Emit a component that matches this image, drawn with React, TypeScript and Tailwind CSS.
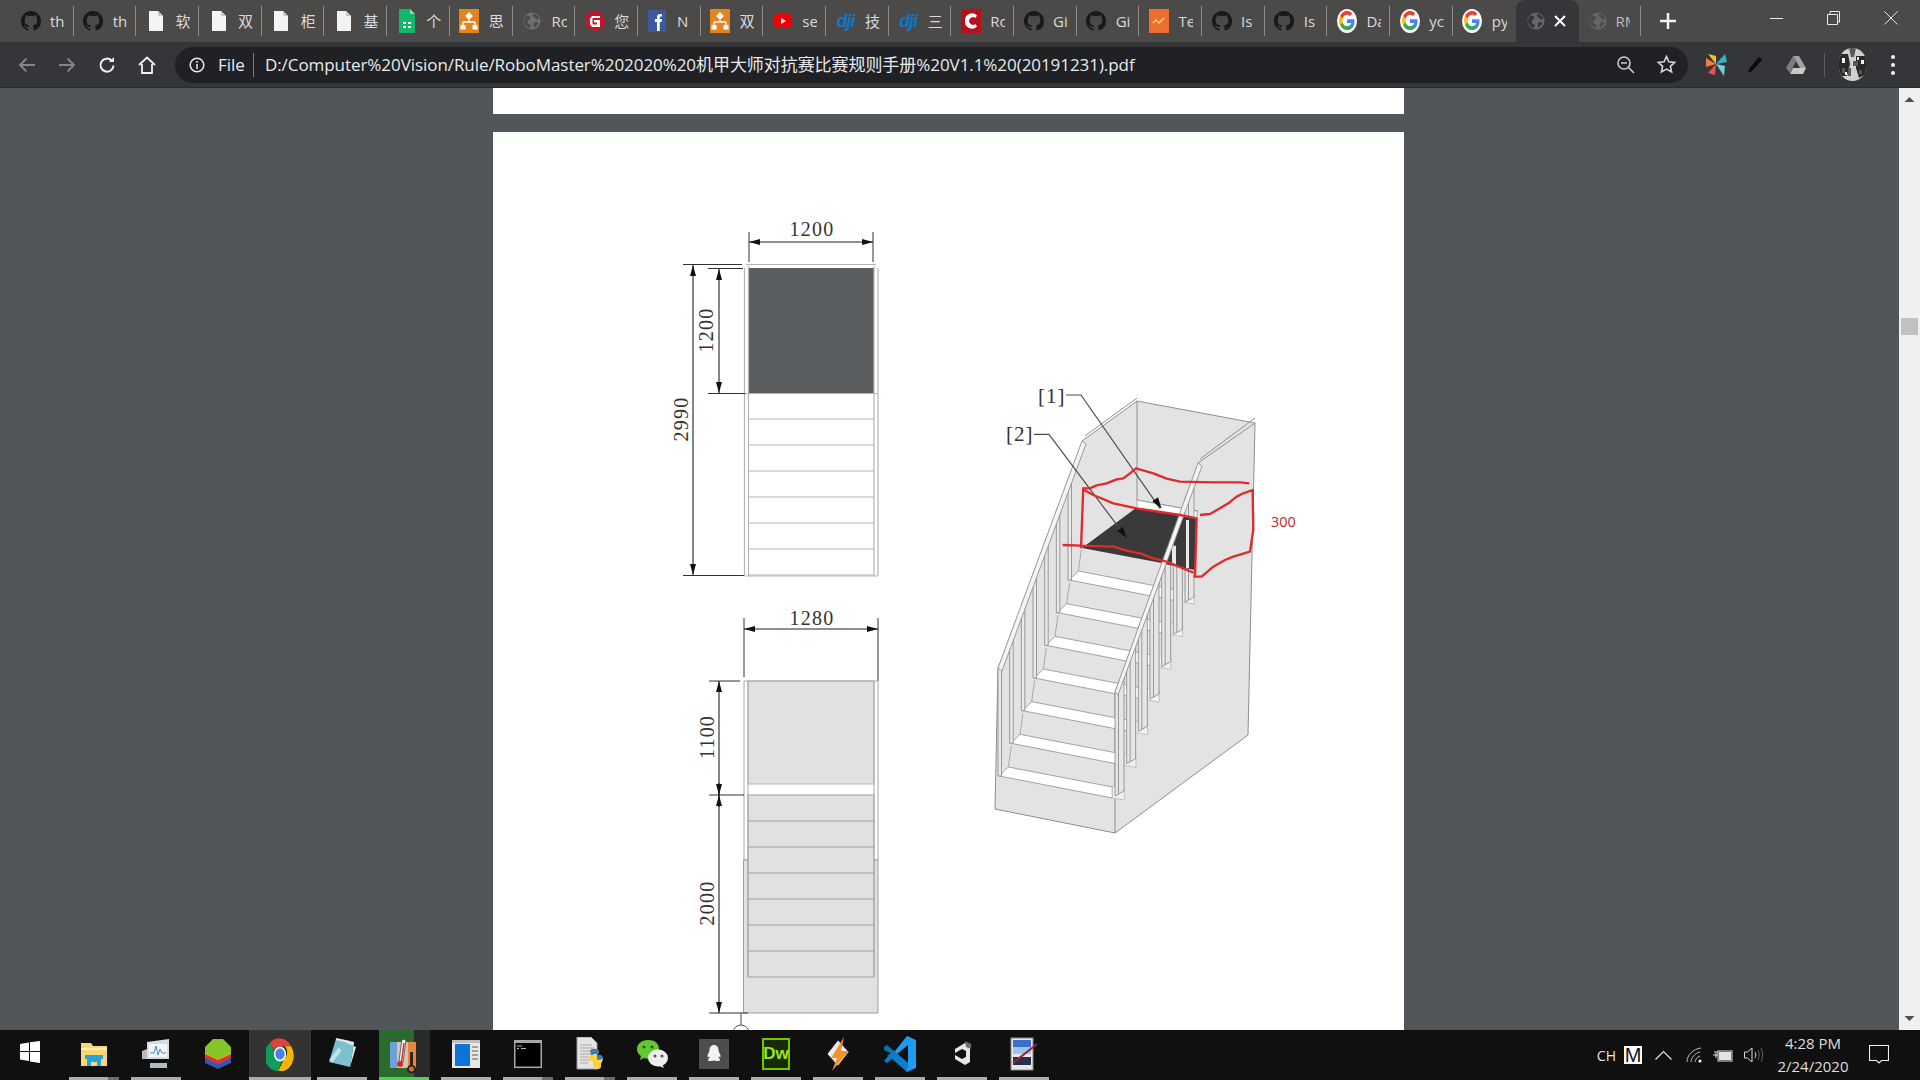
import React from "react";

const UI = { fontFamily: '"Open Sans","Noto Sans","Noto Sans CJK SC",sans-serif' };

function Globe({ c = "#6d7073", dark = "#4b4a49", s = 18 }: { c?: string; dark?: string; s?: number }) {
  return (
    <svg width={s} height={s} viewBox="0 0 20 20">
      <circle cx="10" cy="10" r="9.5" fill={c} />
      <path d="M4 4c3 0 4 1 4 3s-3 2-3 4 2 2 3 3 0 3 0 4c-3-1-7-4-7-8 0-3 2-5 3-6zM12 2c3 1 6 3 6 6-2 1-3 0-4-1s-3-1-3-3 0-2 1-2zM14 11c2 0 3 0 3 1-1 3-3 5-5 5 0-3 0-6 2-6z" fill={dark} />
    </svg>
  );
}
function GitHub({ s = 20 }: { s?: number }) {
  return (
    <svg width={s} height={s} viewBox="0 0 16 16" fill="#16181a">
      <path d="M8 0C3.58 0 0 3.58 0 8c0 3.54 2.29 6.53 5.47 7.59.4.07.55-.17.55-.38v-1.34c-2.23.48-2.7-1.07-2.7-1.07-.36-.92-.89-1.17-.89-1.17-.73-.5.05-.49.05-.49.8.06 1.23.83 1.23.83.71 1.22 1.87.87 2.33.66.07-.52.28-.87.5-1.07-1.78-.2-3.64-.89-3.64-3.95 0-.87.31-1.59.82-2.15-.08-.2-.36-1.02.08-2.12 0 0 .67-.21 2.2.82a7.6 7.6 0 0 1 4 0c1.53-1.04 2.2-.82 2.2-.82.44 1.1.16 1.92.08 2.12.51.56.82 1.27.82 2.15 0 3.07-1.87 3.75-3.65 3.95.29.25.54.73.54 1.48v2.2c0 .21.15.46.55.38A8 8 0 0 0 16 8c0-4.42-3.58-8-8-8z" />
    </svg>
  );
}
function Doc() {
  return (
    <svg width="16" height="20" viewBox="0 0 16 20">
      <path d="M1 0h9l5 5v15H1z" fill="#f4f4f4" />
      <path d="M10 0l5 5h-5z" fill="#c9c9c9" />
    </svg>
  );
}
function Sheet() {
  return (
    <svg width="18" height="24" viewBox="0 0 18 24">
      <path d="M1 0h11l5 5v19H1z" fill="#12b76a" />
      <path d="M12 0l5 5h-5z" fill="#7ee0ae" />
      <path d="M5 13h3v2H5zM10 13h3v2h-3zM5 17h3v2H5zM10 17h3v2h-3z" fill="#fff" />
    </svg>
  );
}
function Mind() {
  return (
    <svg width="20" height="24" viewBox="0 0 20 24">
      <rect width="20" height="24" fill="#e5841f" />
      <path d="M10 4l3 3-3 3-3-3z M10 9v4M4 13h12M4 13v3M16 13v3" stroke="#fff" fill="#fff" strokeWidth="1.3" />
      <rect x="1.5" y="16" width="5" height="4.5" fill="#fff" />
      <rect x="13.5" y="16" width="5" height="4.5" fill="#fff" />
    </svg>
  );
}
function GRed() {
  return (
    <svg width="20" height="20" viewBox="0 0 20 20">
      <circle cx="10" cy="10" r="10" fill="#c3162a" />
      <path d="M15 5H7L5 8v5l2 3h8V9h-6v2.500h3v2H8l-.5-1V7.500l.5-.5h7z" fill="#fff" />
    </svg>
  );
}
function Fb() {
  return (
    <svg width="18" height="22" viewBox="0 0 18 22">
      <rect width="18" height="22" rx="1" fill="#3b5a9d" />
      <path d="M9 21v-9H7V9h2V7c0-2.500 1.500-3.500 5-3v2.500c-2-.3-2.300.2-2.300 1V9H14l-.5 3h-1.800v9z" fill="#fff" />
    </svg>
  );
}
function Yt() {
  return (
    <svg width="18" height="14" viewBox="0 0 18 14">
      <rect width="18" height="14" rx="4" fill="#f00000" />
      <path d="M7 4l5 3-5 3z" fill="#fff" />
    </svg>
  );
}
function Dji() {
  return (
    <span style={{ fontFamily: '"Liberation Sans",sans-serif' }} className="text-[18px] font-bold italic leading-none tracking-[-1px] text-[#0c78c8]">
      dji
    </span>
  );
}
function Csdn() {
  return (
    <svg width="20" height="24" viewBox="0 0 20 24">
      <rect width="20" height="24" fill="#b8101a" />
      <path d="M16 6.500A7 7 0 0 0 4 12a7 7 0 0 0 12 5.500l-1.500-2.500a4 4 0 0 1-6.500-3 4 4 0 0 1 6.500-3z" fill="#fff" />
    </svg>
  );
}
function Te() {
  return (
    <svg width="20" height="24" viewBox="0 0 20 24">
      <rect width="20" height="24" fill="#ee6f2d" />
      <path d="M4 14l3-3 3 3 5-5" stroke="#ffd27c" strokeWidth="1.500" fill="none" />
    </svg>
  );
}
function Goog() {
  return (
    <svg width="20" height="24" viewBox="0 0 24 24" preserveAspectRatio="none">
      <circle cx="12" cy="12" r="12" fill="#fff" />
      <path d="M21 12.200c0-.7-.1-1.300-.2-1.900H12v3.600h5c-.2 1.200-.9 2.200-1.900 2.800v2.400h3.100c1.800-1.700 2.800-4.100 2.800-6.900z" fill="#4285f4" />
      <path d="M12 21c2.600 0 4.700-.9 6.200-2.300l-3.100-2.400c-.8.6-1.900.9-3.100.9-2.400 0-4.400-1.600-5.100-3.800H3.700v2.500A9.300 9.300 0 0 0 12 21z" fill="#34a853" />
      <path d="M6.900 13.400c-.4-1.200-.4-2.600 0-3.800V7.100H3.700a9.300 9.300 0 0 0 0 8.800z" fill="#fbbc05" />
      <path d="M12 5.800c1.400 0 2.600.5 3.600 1.400l2.700-2.700A9 9 0 0 0 3.700 7.100l3.200 2.500C7.600 7.400 9.600 5.800 12 5.800z" fill="#ea4335" />
    </svg>
  );
}

const G = <GitHub />;
const tabs: { i: React.ReactNode; t: string }[] = [
  { i: G, t: "th" }, { i: G, t: "th" }, { i: <Doc />, t: "软" }, { i: <Doc />, t: "双" }, { i: <Doc />, t: "柜" }, { i: <Doc />, t: "基" },
  { i: <Sheet />, t: "个" }, { i: <Mind />, t: "思" }, { i: <Globe />, t: "Rc" }, { i: <GRed />, t: "您" }, { i: <Fb />, t: "N" }, { i: <Mind />, t: "双" },
  { i: <Yt />, t: "se" }, { i: <Dji />, t: "技" }, { i: <Dji />, t: "三" }, { i: <Csdn />, t: "Rc" }, { i: G, t: "Gi" }, { i: G, t: "Gi" },
  { i: <Te />, t: "Te" }, { i: G, t: "Is" }, { i: G, t: "Is" }, { i: <Goog />, t: "Da" }, { i: <Goog />, t: "yc" }, { i: <Goog />, t: "py" },
];

function Tab({ i, t, sep = true }: { i: React.ReactNode; t: string; sep?: boolean }) {
  return (
    <div className="flex h-[42px] w-[62.7px] shrink-0 items-center">
      <div className="flex w-[38px] shrink-0 justify-center pl-[1px]">{i}</div>
      <div className="ml-[1px] w-[15px] shrink-0 overflow-hidden whitespace-nowrap text-[15px] text-[#dadbdc]">{t}</div>
      <div className="flex-1" />
      {sep && <div className="h-[30px] w-[1px] bg-[#8c8c8c]" />}
    </div>
  );
}

function TabStrip() {
  return (
    <div style={UI} className="flex h-[42px] shrink-0 items-start bg-[#4b4a49] pl-[11px]">
      {tabs.map((x, n) => (
        <Tab key={n} i={x.i} t={x.t} sep={n !== 23} />
      ))}
      <div className="flex h-[42px] w-[63px] shrink-0 items-center gap-[8px] rounded-t-[9px] bg-[#35363a] pl-[11px]">
        <Globe c="#63666b" dark="#35363a" />
        <svg width="14" height="14" viewBox="0 0 14 14" stroke="#fff" strokeWidth="2"><path d="M2 2l10 10M12 2L2 12" /></svg>
      </div>
      <div className="flex h-[42px] w-[62px] shrink-0 items-center pl-[10px]">
        <Globe c="#63666b" />
        <div className="ml-[9px] w-[14px] overflow-hidden whitespace-nowrap text-[15px] text-[#bdbdbd]">RM</div>
        <div className="flex-1" />
        <div className="h-[30px] w-[1px] bg-[#8c8c8c]" />
      </div>
      <div className="ml-[19px] flex h-[42px] items-center">
        <svg width="16" height="16" viewBox="0 0 16 16" stroke="#f1f1f1" strokeWidth="2.500"><path d="M8 0v16M0 8h16" /></svg>
      </div>
      <div className="flex-1" />
      <div className="flex h-[36px] items-center">
        <div className="flex w-[57px] justify-center">
          <div className="h-[1px] w-[13px] bg-[#e8e8e8]" />
        </div>
        <div className="flex w-[57px] justify-center">
          <svg width="13" height="14" viewBox="0 0 13 14" fill="none" stroke="#e8e8e8"><path d="M.5 3.500h10v10H.5zM3 3.500V.5h9.500V11h-2" /></svg>
        </div>
        <div className="flex w-[58px] justify-center">
          <svg width="14" height="14" viewBox="0 0 14 14" fill="none" stroke="#e8e8e8"><path d="M.5.5l13 13M13.500.5L.5 13.500" /></svg>
        </div>
      </div>
    </div>
  );
}

function Toolbar() {
  return (
    <div style={UI} className="flex h-[46px] shrink-0 items-center border-b border-[#2a2b2e] bg-[#35363a]">
      <div className="flex w-[7px]" />
      <div className="flex w-[40px] justify-center">
        <svg width="18" height="16" viewBox="0 0 18 16" fill="none" stroke="#84868a" strokeWidth="1.800"><path d="M17 8H2M8.500 1.500L2 8l6.500 6.500" /></svg>
      </div>
      <div className="flex w-[40px] justify-center">
        <svg width="18" height="16" viewBox="0 0 18 16" fill="none" stroke="#84868a" strokeWidth="1.800"><path d="M1 8h15M9.500 1.500L16 8l-6.500 6.500" /></svg>
      </div>
      <div className="flex w-[40px] justify-center">
        <svg width="18" height="18" viewBox="0 0 18 18" fill="none" stroke="#f1f1f1" strokeWidth="2"><path d="M15.500 9.500a6.500 6.500 0 1 1-1.900-5" /><path d="M16 1v5h-5z" fill="#f1f1f1" stroke="none" /></svg>
      </div>
      <div className="flex w-[40px] justify-center">
        <svg width="18" height="18" viewBox="0 0 18 18" fill="none" stroke="#f1f1f1" strokeWidth="1.800"><path d="M1 9l8-7.500L17 9M4 8v9h10V8" /></svg>
      </div>
      <div className="ml-[8px] flex h-[36px] w-[1513px] items-center rounded-[18px] bg-[#202124]">
        <div className="flex w-[43px] justify-center">
          <svg width="16" height="16" viewBox="0 0 16 16" fill="none" stroke="#e8eaed" strokeWidth="1.500"><circle cx="8" cy="8" r="6.800" /><path d="M8 7v5M8 4v1.800" /></svg>
        </div>
        <span className="text-[17px] text-[#e8eaed]">File</span>
        <div className="ml-[8px] mr-[11px] h-[24px] w-[1px] bg-[#7a7b7d]" />
        <span className="whitespace-nowrap text-[17px] tracking-[-0.06px] text-[#e8eaed]">D:/Computer%20Vision/Rule/RoboMaster%202020%20机甲大师对抗赛比赛规则手册%20V1.1%20(20191231).pdf</span>
        <div className="flex-1" />
        <svg width="19" height="19" viewBox="0 0 19 19" fill="none" stroke="#c9cbce" strokeWidth="1.600"><circle cx="8" cy="8" r="6" /><path d="M12.500 12.500L18 18M5 8h6" /></svg>
        <div className="ml-[22px] mr-[12px]">
          <svg width="19" height="19" viewBox="0 0 19 19" fill="none" stroke="#d5d6d8" strokeWidth="1.600"><path d="M9.500 1.500l2.400 5.300 5.800.6-4.300 3.900 1.200 5.700-5.100-2.900-5.100 2.900 1.200-5.700L1.300 7.400l5.800-.6z" /></svg>
        </div>
      </div>
      <div className="ml-[17px] flex w-[22px] justify-center">
        <svg width="21" height="24" viewBox="0 0 21 24">
          <path d="M10 11L2 1l8 2z" fill="#f2c230" />
          <path d="M10 11l9-10 2 8z" fill="#2cb6c7" />
          <path d="M10 11l9 2-1 10z" fill="#6ed0d8" />
          <path d="M10 11l-1 11-7-2z" fill="#e9544f" />
          <path d="M10 11L0 14V5z" fill="#f07f3a" />
        </svg>
      </div>
      <div className="ml-[17px] flex w-[22px] justify-center">
        <svg width="16" height="18" viewBox="0 0 16 18"><path d="M1 17l1-4L11 2c1-1 2-1 3 0s1 2 0 3L5 15z" fill="#0c0c0c" /></svg>
      </div>
      <div className="ml-[19px] flex w-[22px] justify-center">
        <svg width="20" height="18" viewBox="0 0 20 18">
          <path d="M7 0h6l7 12h-6z" fill="#a3a3a3" /><path d="M7 0l3 5-6 12-4-5z" fill="#7d7d7d" /><path d="M4 18l3-6h13l-3 6z" fill="#c9c9c9" />
        </svg>
      </div>
      <div className="ml-[17px] h-[24px] w-[1px] bg-[#5b5c5f]" />
      <div className="ml-[14px] flex h-[33px] w-[27px] items-center justify-center overflow-hidden rounded-full bg-[#d0d0d0]">
        <svg width="27" height="33" viewBox="0 0 27 33">
          <path d="M0 6h9l2 10-3 12H0zM17 8h10v18l-7 4-3-10z" fill="#2b2828" />
          <path d="M10 0h7l-2 9h-3zM9 20h3v8H9zM14 13h5v5h-5zM3 20h3v5H3zM20 22h3v4h-3z" fill="#5c5858" />
          <path d="M3 10h3v5H3zM22 12h3v4h-3zM6 24h2v3H6zM18 9h2v3h-2z" fill="#f2f2f2" />
        </svg>
      </div>
      <div className="ml-[25px] flex flex-col gap-[4px]">
        <div className="h-[4px] w-[4px] rounded-full bg-[#f1f1f1]" />
        <div className="h-[4px] w-[4px] rounded-full bg-[#f1f1f1]" />
        <div className="h-[4px] w-[4px] rounded-full bg-[#f1f1f1]" />
      </div>
    </div>
  );
}

const SERIF = '"Liberation Serif",serif';
const dimText = { fontFamily: SERIF, fontSize: 20, fill: "#333", letterSpacing: 1.2 } as const;

function ArrowV({ x, y1, y2 }: { x: number; y1: number; y2: number }) {
  return (
    <g>
      <path d={`M${x} ${y1}V${y2}`} stroke="#222" strokeWidth="1.100" />
      <path d={`M${x} ${y1}l-3 11h6zM${x} ${y2}l-3 -11h6z`} fill="#111" />
    </g>
  );
}
function ArrowH({ y, x1, x2 }: { y: number; x1: number; x2: number }) {
  return (
    <g>
      <path d={`M${x1} ${y}H${x2}`} stroke="#222" strokeWidth="1.100" />
      <path d={`M${x1} ${y}l11 -3v6zM${x2} ${y}l-11 -3v6z`} fill="#111" />
    </g>
  );
}
function VText({ x, y, t }: { x: number; y: number; t: string }) {
  return (
    <text {...dimText} transform={`translate(${x} ${y}) rotate(-90)`} textAnchor="middle">
      {t}
    </text>
  );
}

function TopPlan() {
  const ys = [419, 445, 471, 497, 523, 549, 575];
  return (
    <g>
      <text {...dimText} x="812" y="236" textAnchor="middle">1200</text>
      <path d="M749 232V262M873 232V262" stroke="#333" />
      <ArrowH y={242} x1={749} x2={873} />
      <rect x="748" y="268" width="126" height="125" fill="#5a5e61" />
      <path d="M744.500 268V576M748.500 266V576M874 266V576M878 268V576M746 264.500H876M745 576H878M744 393.500H878" stroke="#b4b4b4" fill="none" strokeWidth="1.200" />
      {ys.map((y) => <path key={y} d={`M748 ${y}H874`} stroke="#b4b4b4" strokeWidth="1.200" />)}
      <path d="M683 264.500H742M708 268.500H743M708 393.500H745M683 575.500H744" stroke="#333" />
      <ArrowV x={693} y1={265} y2={575} />
      <ArrowV x={719} y1={269} y2={393} />
      <VText x={713} y={330} t="1200" />
      <VText x={688} y={419} t="2990" />
    </g>
  );
}

function BottomPlan() {
  const ys = [821, 847, 873, 899, 925, 951];
  return (
    <g>
      <text {...dimText} x="812" y="625" textAnchor="middle">1280</text>
      <path d="M744 618V677M878 618V681" stroke="#333" />
      <ArrowH y={629} x1={744} x2={878} />
      <rect x="743.500" y="860" width="134.500" height="153" fill="#e1e1e1" stroke="#a0a0a0" />
      <rect x="748" y="681" width="126" height="103" fill="#e1e1e1" stroke="#b5b5b5" />
      <rect x="748" y="795" width="126" height="182" fill="#e1e1e1" stroke="#a0a0a0" />
      <path d="M744 681V860M878 681V860M743 860H748M874 860H878M748 681V977M874 681V977M744 681H878" stroke="#a8a8a8" fill="none" />
      {ys.map((y) => <path key={y} d={`M748 ${y}H874`} stroke="#a0a0a0" strokeWidth="1.200" />)}
      <path d="M709 681H740M709 795H744M709 1013H748" stroke="#333" />
      <ArrowV x={719} y1={681} y2={795} />
      <ArrowV x={719} y1={795} y2={1013} />
      <path d="M719 795v-12M719 795v12" stroke="#111" />
      <VText x={714} y={737} t="1100" />
      <VText x={714} y={903} t="2000" />
      <path d="M741 1013V1025" stroke="#444" />
      <circle cx="741" cy="1033" r="8" fill="none" stroke="#555" />
    </g>
  );
}

function Iso() {
  const steps = [0, 1, 2, 3, 4, 5, 6];
  const gray = "#8e8e8e";
  const railL = (x: number) => 668 - (x - 998) * 2.7;
  const railR = (x: number) => 692 - (x - 1115) * 2.76;
  return (
    <g>
      <path d="M1137 401L1255 423L1248 735L1115 833L995 809L998 668L1082 441z" fill="#e3e3e3" />
      <path d="M1137 401L1255 423M1255 423L1248 735L1115 833L995 809L998 668M1137 401V500M1115 692V833M1198 463L1255 423M1082 441L1137 401M1085 436L1137 398M1200 459L1255 418" stroke={gray} fill="none" />
      <path d="M1137 500L1198 511" stroke={gray} />

      {/* treads */}
      {steps.map((i) => {
        const lx = 999.300 + (35 * i) / 3;
        const ly = 776 - (98 * i) / 3;
        return (
          <g key={i}>
            <path d={`M${lx} ${ly}L${lx + 113} ${ly + 22}V${ly + 11}L${lx + 9} ${ly - 9}z`} fill="#fff" stroke={gray} strokeWidth=".8" />
            <path d={`M${lx + 113} ${ly + 22}l12 2v-11l-12 -3z`} fill="#f0f0f0" stroke="#a8a8a8" strokeWidth=".6" />
            <path d={`M${lx + 9} ${ly - 9}L${lx + 12} ${ly - 30}`} stroke={gray} strokeWidth=".7" />
          </g>
        );
      })}
      {/* top landing */}
      <path d="M1137 500L1197 511V518L1137 508z" fill="#fff" stroke={gray} strokeWidth=".7" />

      {/* dark floor */}
      <path d="M1136 508L1196 518L1195 570L1183 567L1082 548z" fill="#3a3a3a" />

      {/* left balusters */}
      {steps.map((i) => {
        const x = 998 + (35 * i) / 3;
        const b = 776 - (98 * i) / 3;
        return (
          <g key={i}>
            <path d={`M${x} ${railL(x)}V${b}H${x + 3.500}V${railL(x + 3)}z`} fill="#e9e9e9" stroke={gray} strokeWidth=".9" />
          </g>
        );
      })}
      <path d={`M998 668L1082 441L1086 444L1002 671z`} fill="#f4f4f4" stroke={gray} strokeWidth=".9" />

      {/* right balusters */}
      {steps.map((i) => {
        const x = 1115 + (35 * i) / 3;
        const b = 796 - (97 * i) / 3;
        return (
          <g key={i}>
            <path d={`M${x} ${railR(x)}V${b}L${x + 9} ${b - 5}V${railR(x + 9) + 2}z`} fill="#e6e6e6" stroke={gray} strokeWidth=".9" />
            <path d={`M${x + 3.500} ${railR(x + 3)}V${b - 2}`} stroke={gray} strokeWidth=".9" />
          </g>
        );
      })}
      {/* dark floor seen through the right rail */}
      <path d="M1172 515L1196 518L1195 570L1164 564z" fill="#3a3a3a" />
      <path d="M1172 545L1176 546V566L1172 565zM1186 520L1189 520V568L1186 568z" fill="#e8e8e8" />
      <path d="M1115 692L1198 463L1202 466L1118 695z" fill="#f4f4f4" stroke={gray} strokeWidth=".9" />

      {/* leaders */}
      <g transform="translate(980 380) scale(.3333)">
        <path d="M258 45H303L540 385" stroke="#4a4a4a" strokeWidth="3.500" fill="none" />
        <path d="M545 386L517 364L534 352z" fill="#111" />
        <path d="M162 163H207L437 470" stroke="#4a4a4a" strokeWidth="3.500" fill="none" />
        <path d="M440 474L412 452L429 440z" fill="#111" />
        <g fill="none" stroke="#e02a2d" strokeWidth="7" strokeLinejoin="round">
          <path d="M310 325L330 325L350 316L380 310L410 298L430 295L450 280L468 265L520 280L560 296L600 305L700 307L780 307L808 310" />
          <path d="M310 322L303 505M248 495L305 497L400 500L440 512L480 520L520 535L560 545L640 578" />
          <path d="M308 328L340 345L400 370L470 385L600 405L650 415L645 590" />
          <path d="M640 590L665 590L700 560L735 540L760 530L810 515L820 450L818 330L790 340L770 350L745 370L720 385L690 402L660 405" />
        </g>
      </g>
      <text x="1038" y="403" style={{ fontFamily: SERIF, fontSize: 21, fill: "#333", letterSpacing: 1 }}>[1]</text>
      <text x="1006" y="441" style={{ fontFamily: SERIF, fontSize: 21, fill: "#333", letterSpacing: 1 }}>[2]</text>
      <text x="1271" y="527" style={{ fontFamily: '"Open Sans",sans-serif', fontSize: 14.500, fill: "#c0262a" }}>300</text>
    </g>
  );
}

function PdfArea() {
  return (
    <div className="flex min-h-0 flex-1">
      <div className="flex min-w-0 flex-1 flex-col items-center overflow-hidden bg-[#50565a] pr-[2px]">
        <div className="h-[26px] w-[911px] shrink-0 bg-white" />
        <div className="mt-[18px] h-[898px] w-[911px] shrink-0 overflow-hidden bg-white">
          <svg width="911" height="898" viewBox="493 132 911 898">
            <TopPlan />
            <BottomPlan />
            <Iso />
          </svg>
        </div>
      </div>
      <div className="flex w-[21px] shrink-0 flex-col items-center bg-[#f0f0f0] pl-[0px]">
        <svg width="21" height="21" viewBox="0 0 21 21" className="shrink-0"><path d="M10.500 9l5 5h-10z" fill="#505050" /></svg>
        <div className="mt-[209px] h-[17px] w-[17px] shrink-0 bg-[#c1c1c1]" />
        <div className="flex-1" />
        <svg width="21" height="21" viewBox="0 0 21 21" className="shrink-0"><path d="M10.500 12l5 -5h-10z" fill="#505050" /></svg>
      </div>
    </div>
  );
}

const TI: Record<string, React.ReactNode> = {
  win: (
    <svg width="20" height="24" viewBox="0 0 20 24" fill="#fff" className="mb-1 mr-[4px]">
      <path d="M0 4l9-1.500V11H0zM10 2.300L20 1v10H10zM0 12h9v9l-9-1.500zM10 12h10v11l-10-1.500z" />
    </svg>
  ),
  folder: (
    <svg width="28" height="28" viewBox="0 0 28 28">
      <path d="M1 3h10l2 3h14v20H1z" fill="#f8d775" />
      <path d="M1 8h26v2H1z" fill="#fdebb0" />
      <path d="M7 26v-8h14v8h-4v-4h-6v4zM5 15h18v4H5z" fill="#2aa3dc" />
    </svg>
  ),
  mon: (
    <svg width="28" height="30" viewBox="0 0 28 30">
      <path d="M5 3l22-3v20L5 20z" fill="#d8dde0" />
      <path d="M7 5h18v13H7z" fill="#f4f7f8" />
      <path d="M8 14l4 0 2-7 2 9 2-6 2 4h4" stroke="#3d8ed0" fill="none" />
      <path d="M0 12l5-2v10H0zM8 24h17v5H8z" fill="#b8babc" />
    </svg>
  ),
  blue: (
    <svg width="28" height="30" viewBox="0 0 28 30">
      <path d="M1 17l13 6 13-6v7l-13 6-13-6z" fill="#3656b8" />
      <path d="M1 13l13 6 13-6v6l-13 6-13-6z" fill="#d63a2e" />
      <path d="M1 9l13 6 13-6v6l-13 6-13-6z" fill="#e7b32b" />
      <path d="M9 0h10l8 8v6l-13 6L1 14V8z" fill="#84c52a" />
    </svg>
  ),
  chrome: (
    <svg width="28" height="34" viewBox="0 0 48 48" preserveAspectRatio="none">
      <path d="M24 2a22 22 0 0 1 19 11H24a11 11 0 0 0-10 6L7 8A22 22 0 0 1 24 2z" fill="#db4437" />
      <path d="M7 8l9 16a11 11 0 0 0 11 10l-6 14A22 22 0 0 1 7 8z" fill="#0f9d58" />
      <path d="M43 13a22 22 0 0 1-22 35l10-17a11 11 0 0 0 1-18z" fill="#f4b400" />
      <circle cx="24" cy="24" r="10.500" fill="#fff" />
      <circle cx="24" cy="24" r="8" fill="#4a80e8" />
    </svg>
  ),
  note: (
    <svg width="28" height="32" viewBox="0 0 28 32">
      <path d="M8 1l18 3-4 25L1 24z" fill="#7cc0cf" />
      <path d="M12 2l14 2-4 25 6-20z" fill="#dfe9ea" />
      <path d="M8 1l14 3" stroke="#e8e8e8" strokeWidth="2" />
      <path d="M3 23l9-12" stroke="#c3e4ea" strokeWidth="4" />
    </svg>
  ),
  therm: (
    <svg width="28" height="36" viewBox="0 0 28 36">
      <rect x="0" y="3" width="26" height="26" rx="2" fill="#d7c3b0" />
      <rect x="0" y="3" width="7" height="26" fill="#6da0d8" />
      <rect x="18" y="3" width="8" height="26" fill="#e9863c" />
      <path d="M12 0l4 1-3 22-4-1z" fill="#f5f5f5" stroke="#333" strokeWidth=".7" />
      <circle cx="10" cy="25" r="3" fill="#c7332d" />
      <path d="M11.500 23L14 4" stroke="#c7332d" strokeWidth="1.500" />
      <path d="M20 13h3v13a4.500 4.500 0 1 1-3 0z" fill="#342117" />
      <circle cx="21.500" cy="30" r="2.500" fill="#c9772f" />
    </svg>
  ),
  app: (
    <svg width="28" height="28" viewBox="0 0 28 28">
      <rect width="28" height="28" fill="#e8e8e8" />
      <rect y="0" width="28" height="3" fill="#bdbdbd" />
      <rect x="3" y="4" width="15" height="22" fill="#0f74d9" />
      <path d="M20 7h6M20 11h6M20 15h6M20 19h6" stroke="#8b8b8b" strokeWidth="1.500" />
    </svg>
  ),
  term: (
    <svg width="28" height="28" viewBox="0 0 28 28">
      <rect width="28" height="28" fill="#a6a6a6" />
      <rect x="1.500" y="3" width="25" height="23.500" fill="#000" />
      <path d="M3 6h5M3 8.500h2M7 8.500h5" stroke="#b5b5b5" />
    </svg>
  ),
  py: (
    <svg width="28" height="34" viewBox="0 0 28 34">
      <path d="M1 0h14l6 6v26H1z" fill="#e4e4e4" stroke="#9b9b9b" />
      <path d="M4 8h12M4 11h14M4 14h10M4 17h14M4 20h8M4 23h10M4 26h8" stroke="#a8a8a8" />
      <path d="M14 14c0-3 9-3 9 0v3h-6v1h8l2 2v2c0 2-1 3-3 3h-7z" fill="#3d7cb5" />
      <path d="M17 27v3c0 3 7 3 8 0v-3l2-5-6 1-4 1z" fill="#ffd43b" />
      <path d="M14 24c-2 0-2-6 1-6h6v6z" fill="#ffd43b" />
    </svg>
  ),
  wechat: (
    <svg width="32" height="30" viewBox="0 0 32 30">
      <path d="M12 1C5.500 1 1 5 1 10c0 3 1.500 5.500 4 7l-1 4 4-2c1.500.5 3 .7 4 .7 6.500 0 11-4 11-9.700S18.500 1 12 1z" fill="#62c935" />
      <ellipse cx="22" cy="19" rx="10" ry="8.500" fill="#eee" />
      <path d="M26 25l2 4-5-2z" fill="#eee" />
      <circle cx="8" cy="8" r="1.500" fill="#1d5f11" /><circle cx="16" cy="8" r="1.500" fill="#1d5f11" />
      <circle cx="19" cy="17" r="1.500" fill="#555" /><circle cx="26" cy="17" r="1.500" fill="#555" />
    </svg>
  ),
  qq: (
    <div className="flex h-[30px] w-[30px] items-center justify-center bg-[#4d4d4d]">
      <svg width="14" height="18" viewBox="0 0 14 18" fill="#f2f2f2"><path d="M7 0c3 0 4.500 2.500 4.500 5 0 1 .5 2 1.500 4 1 2.500.5 4-.5 3l-1-1c0 1.500.5 2.500 1.500 3.500.5 1-1 1.500-3 1.500-1.500 0-2.500-.5-3-.5s-1.500.5-3 .5c-2 0-3.500-.5-3-1.500 1-1 1.500-2 1.500-3.500l-1 1c-1 1-1.500-.5-.5-3 1-2 1.500-3 1.500-4C2.500 2.500 4 0 7 0z" /></svg>
    </div>
  ),
  dw: (
    <div style={{ fontFamily: '"Liberation Sans",sans-serif' }} className="flex h-[32px] w-[28px] items-center justify-center border-2 border-[#73c700] bg-[#1a2a00] text-[17px] font-bold text-[#9be52a]">
      Dw
    </div>
  ),
  winamp: (
    <svg width="26" height="34" viewBox="0 0 26 34">
      <path d="M13 3L24 15 13 29 2 17z" fill="#ececec" stroke="#222" />
      <path d="M19 0L6 21h6l-5 13 17-20h-8z" fill="#f0932b" />
    </svg>
  ),
  vscode: (
    <svg width="32" height="36" viewBox="0 0 32 36">
      <path d="M23 0L32 4v28l-9 4L7 20l16-20zm1 9L13 18l11 9z" fill="#1f9cf0" />
      <path d="M0 11l3-2 21 18-1 9L16 30 3 19l5-1-8-4z" fill="#0a7bc9" opacity=".9" />
      <path d="M0 25l3 2 11-9-5-4z" fill="#0a7bc9" />
    </svg>
  ),
  unity: (
    <svg width="20" height="28" viewBox="0 0 20 28">
      <path d="M13 3L18 6V22L13 25L3 19V15L10 19L14 17V11L10 9L3 13V9z" fill="#e7e7e7" />
      <path d="M13 1L19 4V9L14 7z" fill="#6f6f6f" />
    </svg>
  ),
  paint: (
    <svg width="28" height="34" viewBox="0 0 28 34">
      <rect x="1" y="1" width="22" height="32" fill="#e8e8e8" stroke="#888" />
      <rect x="3" y="3" width="18" height="14" fill="#3a6fd0" />
      <path d="M3 10h18v7H3z" fill="#9fc1ee" />
      <path d="M3 20h18v8H3z" fill="#24324d" />
      <path d="M3 26l24-19" stroke="#9b2436" strokeWidth="2" />
    </svg>
  ),
};

type Cell = { k: string; bar: "" | "n" | "full" | "split" | "green" };
const cells: Cell[] = [
  { k: "win", bar: "" }, { k: "folder", bar: "split" }, { k: "mon", bar: "n" }, { k: "blue", bar: "" }, { k: "chrome", bar: "full" },
  { k: "note", bar: "n" }, { k: "therm", bar: "green" }, { k: "app", bar: "n" }, { k: "term", bar: "split" }, { k: "py", bar: "split" },
  { k: "wechat", bar: "n" }, { k: "qq", bar: "n" }, { k: "dw", bar: "n" }, { k: "winamp", bar: "n" }, { k: "vscode", bar: "n" }, { k: "unity", bar: "n" }, { k: "paint", bar: "n" },
];

function TaskCell({ k, bar }: Cell) {
  return (
    <div className={bar === "full" ? "flex h-[50px] w-[62px] flex-col bg-[#333333]" : "flex h-[50px] w-[62px] flex-col"}>
      <div className="flex min-h-0 flex-1 items-start justify-center">
        {bar === "green" ? (
          <div className="flex h-[47px] w-[51px] justify-center bg-[linear-gradient(to_right,#2b6a2e_0,#2b6a2e_35px,#2a2a2a_35px)] pt-[9px]">{TI[k]}</div>
        ) : (
          <div className="flex h-[47px] items-center">{TI[k]}</div>
        )}
      </div>
      <div className={bar === "full" ? "flex h-[3px]" : "flex h-[3px] px-[6px]"}>
        {bar === "full" && <div className="h-full flex-1 bg-[#adadad]" />}
        {bar === "n" && <div className="h-full flex-1 bg-[#adadad]" />}
        {bar === "split" && (
          <>
            <div className="h-full w-[40px] bg-[#adadad]" />
            <div className="h-full w-[11px] bg-[#6d6d6d]" />
          </>
        )}
        {bar === "green" && <div className="h-full flex-1 bg-[#4fd24f]" />}
      </div>
    </div>
  );
}

function Taskbar() {
  return (
    <div style={UI} className="flex h-[50px] shrink-0 items-center bg-[#101010] pl-[1px] text-[#e4e4e4]">
      {cells.map((c, i) => (
        <TaskCell key={i} {...c} />
      ))}
      <div className="flex-1" />
      <span className="text-[14px]">CH</span>
      <div className="ml-[8px] flex h-[18px] w-[18px] items-center justify-center bg-white text-[20px] leading-none text-[#111]" style={{ fontFamily: '"Liberation Sans",sans-serif' }}>M</div>
      <svg className="ml-[13px]" width="17" height="10" viewBox="0 0 17 10" fill="none" stroke="#e4e4e4" strokeWidth="1.200"><path d="M.5 9.500L8.500 1.500l8 8" /></svg>
      <svg className="ml-[14px]" width="16" height="16" viewBox="0 0 16 16" fill="none" stroke="#bdbdbd"><path d="M1 15C1 8 7 2 15 1M5 15c0-4 4-9 9-10M9 15c0-2 2-5 5-6" /><circle cx="14" cy="14" r="1.500" fill="#fff" stroke="none" /></svg>
      <svg className="ml-[11px]" width="20" height="13" viewBox="0 0 20 13"><path d="M0 6h5M2 2v2M4 2v2M3 4v5" stroke="#e4e4e4" fill="none" /><rect x="5" y="2" width="14" height="10" fill="none" stroke="#e4e4e4" /><rect x="6" y="3" width="12" height="8" fill="#e4e4e4" /></svg>
      <svg className="ml-[11px]" width="20" height="16" viewBox="0 0 20 16" fill="none" stroke="#d8d8d8"><path d="M.5 5h3L8 1v14l-4.500-4h-3z" /><path d="M11 5c1 2 1 4 0 6" /><path d="M14 3c1.500 3 1.500 7 0 10M17 1c2 4 2 10 0 14" stroke="#666" /></svg>
      <div className="ml-[6px] flex w-[86px] flex-col items-center text-[15px] leading-[23px] text-[#dedede]">
        <span>4:28 PM</span>
        <span>2/24/2020</span>
      </div>
      <svg className="ml-[13px] mr-[31px]" width="20" height="20" viewBox="0 0 20 20" fill="none" stroke="#f1f1f1" strokeWidth="1.100"><path d="M.5.5h19v15h-7L10 18l-2.500-2.500h-7z" /></svg>
    </div>
  );
}

export default function App() {
  return (
    <div className="flex h-[1080px] w-[1920px] flex-col overflow-hidden bg-[#50565a]">
      <TabStrip />
      <Toolbar />
      <PdfArea />
      <Taskbar />
    </div>
  );
}
